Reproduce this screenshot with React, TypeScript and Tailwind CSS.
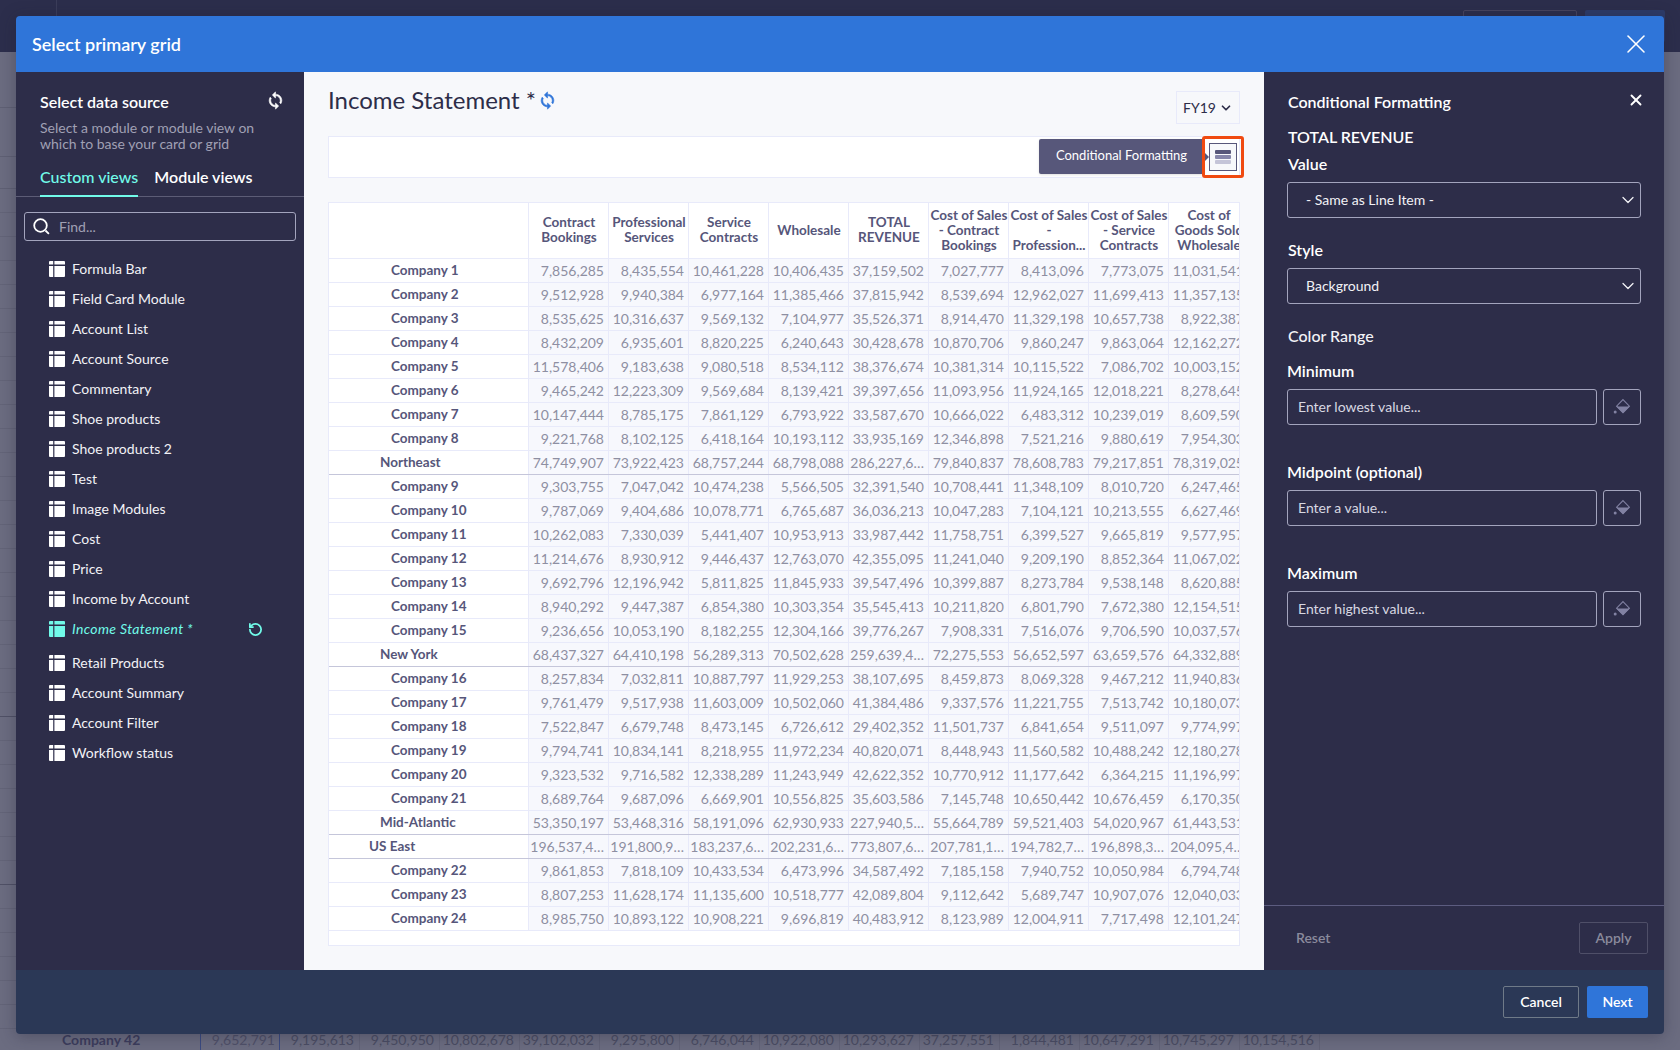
import { ChevronDown, RotateCcw, X } from "lucide-react";

const FONT = "font-['Lato','Liberation_Sans',sans-serif]";

const VIEWS = [
  "Formula Bar",
  "Field Card Module",
  "Account List",
  "Account Source",
  "Commentary",
  "Shoe products",
  "Shoe products 2",
  "Test",
  "Image Modules",
  "Cost",
  "Price",
  "Income by Account",
];
const VIEWS_AFTER = ["Retail Products", "Account Summary", "Account Filter", "Workflow status"];

const HEADERS = [
  ["Contract", "Bookings"],
  ["Professional", "Services"],
  ["Service", "Contracts"],
  ["Wholesale"],
  ["TOTAL", "REVENUE"],
  ["Cost of Sales", "- Contract", "Bookings"],
  ["Cost of Sales", "-", "Profession..."],
  ["Cost of Sales", "- Service", "Contracts"],
  ["Cost of", "Goods Sold", "Wholesale"],
];

// label, level (0 top total, 1 region, 2 company), values
const ROWS: [string, number, string][] = [
  ["Company 1", 2, "7,856,285 8,435,554 10,461,228 10,406,435 37,159,502 7,027,777 8,413,096 7,773,075 11,031,541"],
  ["Company 2", 2, "9,512,928 9,940,384 6,977,164 11,385,466 37,815,942 8,539,694 12,962,027 11,699,413 11,357,135"],
  ["Company 3", 2, "8,535,625 10,316,637 9,569,132 7,104,977 35,526,371 8,914,470 11,329,198 10,657,738 8,922,387"],
  ["Company 4", 2, "8,432,209 6,935,601 8,820,225 6,240,643 30,428,678 10,870,706 9,860,247 9,863,064 12,162,272"],
  ["Company 5", 2, "11,578,406 9,183,638 9,080,518 8,534,112 38,376,674 10,381,314 10,115,522 7,086,702 10,003,152"],
  ["Company 6", 2, "9,465,242 12,223,309 9,569,684 8,139,421 39,397,656 11,093,956 11,924,165 12,018,221 8,278,645"],
  ["Company 7", 2, "10,147,444 8,785,175 7,861,129 6,793,922 33,587,670 10,666,022 6,483,312 10,239,019 8,609,590"],
  ["Company 8", 2, "9,221,768 8,102,125 6,418,164 10,193,112 33,935,169 12,346,898 7,521,216 9,880,619 7,954,303"],
  ["Northeast", 1, "74,749,907 73,922,423 68,757,244 68,798,088 286,227,6… 79,840,837 78,608,783 79,217,851 78,319,025"],
  ["Company 9", 2, "9,303,755 7,047,042 10,474,238 5,566,505 32,391,540 10,708,441 11,348,109 8,010,720 6,247,465"],
  ["Company 10", 2, "9,787,069 9,404,686 10,078,771 6,765,687 36,036,213 10,047,283 7,104,121 10,213,555 6,627,469"],
  ["Company 11", 2, "10,262,083 7,330,039 5,441,407 10,953,913 33,987,442 11,758,751 6,399,527 9,665,819 9,577,957"],
  ["Company 12", 2, "11,214,676 8,930,912 9,446,437 12,763,070 42,355,095 11,241,040 9,209,190 8,852,364 11,067,022"],
  ["Company 13", 2, "9,692,796 12,196,942 5,811,825 11,845,933 39,547,496 10,399,887 8,273,784 9,538,148 8,620,885"],
  ["Company 14", 2, "8,940,292 9,447,387 6,854,380 10,303,354 35,545,413 10,211,820 6,801,790 7,672,380 12,154,515"],
  ["Company 15", 2, "9,236,656 10,053,190 8,182,255 12,304,166 39,776,267 7,908,331 7,516,076 9,706,590 10,037,576"],
  ["New York", 1, "68,437,327 64,410,198 56,289,313 70,502,628 259,639,4… 72,275,553 56,652,597 63,659,576 64,332,889"],
  ["Company 16", 2, "8,257,834 7,032,811 10,887,797 11,929,253 38,107,695 8,459,873 8,069,328 9,467,212 11,940,836"],
  ["Company 17", 2, "9,761,479 9,517,938 11,603,009 10,502,060 41,384,486 9,337,576 11,221,755 7,513,742 10,180,073"],
  ["Company 18", 2, "7,522,847 6,679,748 8,473,145 6,726,612 29,402,352 11,501,737 6,841,654 9,511,097 9,774,997"],
  ["Company 19", 2, "9,794,741 10,834,141 8,218,955 11,972,234 40,820,071 8,448,943 11,560,582 10,488,242 12,180,278"],
  ["Company 20", 2, "9,323,532 9,716,582 12,338,289 11,243,949 42,622,352 10,770,912 11,177,642 6,364,215 11,196,997"],
  ["Company 21", 2, "8,689,764 9,687,096 6,669,901 10,556,825 35,603,586 7,145,748 10,650,442 10,676,459 6,170,350"],
  ["Mid-Atlantic", 1, "53,350,197 53,468,316 58,191,096 62,930,933 227,940,5… 55,664,789 59,521,403 54,020,967 61,443,531"],
  ["US East", 0, "196,537,4… 191,800,9… 183,237,6… 202,231,6… 773,807,6… 207,781,1… 194,782,7… 196,898,3… 204,095,4…"],
  ["Company 22", 2, "9,861,853 7,818,109 10,433,534 6,473,996 34,587,492 7,185,158 7,940,752 10,050,984 6,794,748"],
  ["Company 23", 2, "8,807,253 11,628,174 11,135,600 10,518,777 42,089,804 9,112,642 5,689,747 10,907,076 12,040,033"],
  ["Company 24", 2, "8,985,750 10,893,122 10,908,221 9,696,819 40,483,912 8,123,989 12,004,911 7,717,498 12,101,247"],
];

const BEHIND_VALUES =
  "9,652,791 9,195,613 9,450,950 10,802,678 39,102,032 9,295,800 6,746,044 10,922,080 10,293,627 37,257,551 1,844,481 10,647,291 10,745,297 10,154,516".split(
    " ",
  );

function TableIcon({ active }: { active?: boolean }) {
  return (
    <svg
      width="16"
      height="16"
      viewBox="0 0 16 16"
      className={active ? "shrink-0 fill-[#71fbe9]" : "shrink-0 fill-white"}
    >
      <path d="M1 0h3.2v3.6H0V1a1 1 0 0 1 1-1zM5.4 0H15a1 1 0 0 1 1 1v2.6H5.4zM0 5h4.2v11H1a1 1 0 0 1-1-1zM5.4 5H16v10a1 1 0 0 1-1 1H5.4z" />
    </svg>
  );
}

function SyncIcon({ className }: { className: string }) {
  return (
    <svg width="19" height="19" viewBox="0 0 24 24" className={className}>
      <path
        fill="currentColor"
        stroke="currentColor"
        strokeWidth="0.7"
        d="M12 4V1L8 5l4 4V6c3.31 0 6 2.69 6 6 0 1.01-.25 1.97-.7 2.8l1.46 1.46C19.54 15.03 20 13.57 20 12c0-4.42-3.58-8-8-8zm0 14c-3.31 0-6-2.69-6-6 0-1.01.25-1.97.7-2.8L5.24 7.74C4.46 8.97 4 10.43 4 12c0 4.42 3.58 8 8 8v3l4-4-4-4v3z"
      />
    </svg>
  );
}

function SearchIcon() {
  return (
    <svg width="17" height="17" viewBox="0 0 17 17" fill="none" stroke="white" strokeWidth="1.8">
      <circle cx="7.5" cy="7.5" r="6.3" />
      <path d="M12.5 12.5l3.4 3.4" />
    </svg>
  );
}

function BucketIcon() {
  return (
    <svg width="18" height="18" viewBox="0 0 18 18" className="text-[#8282a3]">
      <path d="M10 1.6l6.4 6.6-6.4 6.4-6.4-6.4z" fill="none" stroke="currentColor" strokeWidth="1.1" />
      <path d="M3.4 8.4h13.2L10 15z" fill="currentColor" />
      <circle cx="2.2" cy="14" r="1.5" fill="currentColor" />
    </svg>
  );
}

function Select({ value }: { value: string }) {
  return (
    <div className="flex h-9 w-[354px] items-center justify-between rounded-[3px] border border-[#a3a4bd] pl-[18px] pr-[2px] text-sm text-[#f2f2f6]">
      <span>{value}</span>
      <ChevronDown size={20} strokeWidth={1.5} />
    </div>
  );
}

function ColorInput({ label, hint, className }: { label: string; hint: string; className: string }) {
  return (
    <div className={className}>
      <div className="text-base font-semibold leading-5 text-white">{label}</div>
      <div className="mt-2 flex gap-[6px]">
        <div className="flex h-9 w-[310px] items-center rounded-[3px] border border-[#a3a4bd] pl-[10px] text-sm text-[#d8d8e2]">
          {hint}
        </div>
        <div className="flex h-9 w-[38px] items-center justify-center rounded-[3px] border border-[#a3a4bd]">
          <BucketIcon />
        </div>
      </div>
    </div>
  );
}

function Sidebar() {
  return (
    <aside className="flex w-[288px] shrink-0 flex-col bg-[#2d2d49]">
      <div className="px-6 pt-5">
        <div className="flex items-center justify-between">
          <h3 className="text-base font-semibold leading-5 text-white">Select data source</h3>
          <SyncIcon className="-mt-1 mr-[-5px] text-white" />
        </div>
        <p className="mt-2 text-sm leading-4 text-[#a0a0b4]">
          Select a module or module view on
          <br />
          which to base your card or grid
        </p>
      </div>
      <div className="mt-2 flex gap-4 border-b border-[#5c5c76] px-6 text-base leading-5">
        <div className="-mb-px border-b-2 border-[#71fbe9] pb-2 pt-[7px] font-medium text-[#71fbe9]">Custom views</div>
        <div className="pb-2 pt-[7px] font-semibold text-white">Module views</div>
      </div>
      <div className="mx-2 mt-[15px] flex h-[29px] items-center gap-[9px] rounded-[3px] border border-[#a3a4bd] pl-2 text-sm text-[#a0a0b4]">
        <SearchIcon />
        <span>Find...</span>
      </div>
      <ul className="mt-[13px] pl-[33px] text-sm text-[#f2f2f6]">
        {VIEWS.map((v) => (
          <li key={v} className="flex h-[30px] items-center gap-[7px]">
            <TableIcon />
            {v}
          </li>
        ))}
        <li className="mb-1 flex h-[30px] items-center gap-[7px] text-[#71fbe9]">
          <TableIcon active />
          <span className="w-[169px] italic tracking-[0.35px]">Income Statement *</span>
          <RotateCcw size={15} strokeWidth={2.8} />
        </li>
        {VIEWS_AFTER.map((v) => (
          <li key={v} className="flex h-[30px] items-center gap-[7px]">
            <TableIcon />
            {v}
          </li>
        ))}
      </ul>
    </aside>
  );
}

function Grid() {
  return (
    <div className="mt-6 h-[744px] w-[912px] overflow-hidden border border-[#e8eafa] bg-white">
      <div className="flex h-14 w-[925px] border-b border-[#e8eafa]">
        <div className="w-[199px] shrink-0" />
        {HEADERS.map((lines) => (
          <div
            key={lines.join()}
            className="flex w-20 shrink-0 flex-col items-center justify-center whitespace-nowrap border-l border-[#e8eafa] pb-px pl-px text-[13.5px] font-bold leading-[15px] text-[#56567a]"
          >
            {lines.map((l) => (
              <span key={l}>{l}</span>
            ))}
          </div>
        ))}
      </div>
      {ROWS.map(([label, level, values]) => (
        <div
          key={label}
          className={
            level < 2
              ? "flex h-6 w-[925px] border-b border-[#c5c6da]"
              : "flex h-6 w-[925px] border-b border-[#e8eafa]"
          }
        >
          <div
            className={
              level === 2
                ? "w-[199px] shrink-0 pl-[62px] text-[13.5px] font-bold leading-[22px] text-[#56567a]"
                : level === 1
                  ? "w-[199px] shrink-0 pl-[51px] text-[13.5px] font-bold leading-[22px] text-[#56567a]"
                  : "w-[199px] shrink-0 pl-10 text-[13.5px] font-bold leading-[22px] text-[#56567a]"
            }
          >
            {label}
          </div>
          {values.split(" ").map((v, i) => (
            <div
              key={i}
              className="w-20 shrink-0 whitespace-nowrap border-l border-[#e8eafa] bg-[#f7f8fd] pr-1 text-right text-sm leading-[23px] text-[#8e8fa2]"
            >
              {v}
            </div>
          ))}
        </div>
      ))}
    </div>
  );
}

function Middle() {
  return (
    <main className="flex-1 bg-[#f7f8fb] pl-6 pr-6">
      <div className="flex h-[64px] items-start justify-between">
        <div className="mt-[15px] flex items-center gap-[2px]">
          <h2 className="text-2xl leading-[26px] text-[#2d2d49]">Income Statement *</h2>
          <SyncIcon className="text-[#2f75d9]" />
        </div>
        <div className="mt-[19px] flex h-[33px] w-[64px] items-center justify-center gap-[3px] border border-[#e8eafa] text-sm text-[#2d2d49]">
          FY19
          <ChevronDown size={14} strokeWidth={3} />
        </div>
      </div>
      <div className="relative h-[42px] w-[912px] border border-[#e8eafa] bg-white">
        <div className="absolute left-[710px] top-[2px] flex h-[35px] w-[165px] items-center justify-center rounded-[2px] bg-[#57577a] pb-px text-[13px] text-white shadow">
          Conditional Formatting
        </div>
        <div className="absolute left-[875px] top-[15px] size-0 border-y-[5px] border-l-[5px] border-y-transparent border-l-[#57577a]" />
        <div className="absolute left-[873px] top-[-1px] flex h-[42px] w-[42px] items-center justify-center rounded-[3px] border-[3px] border-[#f04a10]">
          <div className="flex size-[28px] flex-col items-center justify-center gap-px border border-[#57577a] bg-[#f7f8fb]">
            <span className="h-1 w-4 rounded-[1px] bg-[#57577a]" />
            <span className="h-1 w-4 rounded-[1px] bg-[#8686aa]" />
            <span className="h-1 w-4 rounded-[1px] bg-[#c4c4d8]" />
          </div>
        </div>
      </div>
      <Grid />
    </main>
  );
}

function FormatPanel() {
  return (
    <aside className="flex w-[400px] shrink-0 flex-col bg-[#2d2d49]">
      <div className="flex-1 pl-[23px] pt-5">
        <div className="flex items-center justify-between pl-px pr-[19px]">
          <h3 className="text-base font-semibold leading-5 text-white">Conditional Formatting</h3>
          <X size={18} strokeWidth={2.5} className="-mt-[5px] text-white" />
        </div>
        <div className="ml-px mt-[15px] text-base font-semibold leading-5 text-white">TOTAL REVENUE</div>
        <div className="ml-px mt-[7px] text-base font-semibold leading-5 text-white">Value</div>
        <div className="mt-2">
          <Select value="- Same as Line Item -" />
        </div>
        <div className="ml-px mt-[22px] text-base font-semibold leading-5 text-white">Style</div>
        <div className="mt-2">
          <Select value="Background" />
        </div>
        <div className="ml-px mt-[22px] text-base font-medium leading-5 text-[#f2f2f6]">Color Range</div>
        <ColorInput label="Minimum" hint="Enter lowest value..." className="mt-[15px]" />
        <ColorInput label="Midpoint (optional)" hint="Enter a value..." className="mt-[37px]" />
        <ColorInput label="Maximum" hint="Enter highest value..." className="mt-[37px]" />
      </div>
      <div className="flex h-[65px] items-center justify-between border-t border-[#5c5c80] pb-px pl-8 pr-4 text-sm font-semibold text-[#8a8a9c]">
        <span>Reset</span>
        <div className="flex h-[32px] w-[69px] items-center justify-center rounded-[2px] border border-[#4f4f68]">Apply</div>
      </div>
    </aside>
  );
}

function Behind() {
  const rows = Array.from({ length: 35 });
  return (
    <div className="h-[1050px] bg-[#6b6c80]">
      <div className="relative h-[52px] bg-[#2c2e4c]">
        <div className="absolute left-[56px] top-0 h-[52px] w-px bg-[#3b3d5a]" />
        <div className="absolute left-[1463px] top-[10px] h-8 w-[114px] rounded-[2px] border border-[#47445f]" />
        <div className="absolute left-[1585px] top-[10px] h-8 w-[80px] rounded-[2px] bg-[#2d3b68]" />
      </div>
      <div className="h-[137px] w-[1320px]">
        <div className="h-[56px] border-b border-[#5f6074]" />
        <div className="h-[49px] border-b border-[#5f6074]" />
        <div className="h-[32px] border-b border-[#5f6074]" />
      </div>
      {rows.map((_, i) => (
        <div
          key={i}
          className={
            i === 21 || i === 28 ? "h-6 w-[1320px] border-b border-[#505166]" : "h-6 w-[1320px] border-b border-[#636478]"
          }
        />
      ))}
      <div className={`${FONT} mt-px flex h-[20px]`}>
        <div className="w-[200px] pl-[62px] text-sm font-bold leading-5 text-[#3c3c5c]">Company 42</div>
        {BEHIND_VALUES.map((v, i) => (
          <div
            key={i}
            className={
              i === 0
                ? "w-20 border-x border-[#3a4a80] pr-1 text-right text-sm leading-5 text-[#4f5068]"
                : "w-20 border-r border-[#636478] pr-[5px] text-right text-sm leading-5 text-[#4a4c63]"
            }
          >
            {v}
          </div>
        ))}
      </div>
    </div>
  );
}

export default function App() {
  return (
    <div className={`${FONT} relative h-[1050px] w-[1680px] overflow-hidden`}>
      <Behind />
      <div className="absolute left-4 top-4 flex h-[1018px] w-[1648px] flex-col overflow-hidden rounded-[4px] shadow-[0_2px_16px_rgba(30,30,50,0.35)]">
        <header className="flex h-14 shrink-0 items-center justify-between bg-[#2f75d9] pl-4 pr-3 text-white">
          <h1 className="text-lg font-semibold">Select primary grid</h1>
          <X size={32} strokeWidth={1.15} />
        </header>
        <div className="flex h-[898px]">
          <Sidebar />
          <Middle />
          <FormatPanel />
        </div>
        <footer className="flex flex-1 items-center justify-end gap-2 bg-[#2b3856] pb-px pr-4 text-sm font-semibold text-white">
          <div className="flex h-8 w-[76px] items-center justify-center rounded-[2px] border border-[#6f7a88]">Cancel</div>
          <div className="flex h-8 w-[61px] items-center justify-center rounded-[2px] bg-[#2f75d9]">Next</div>
        </footer>
      </div>
    </div>
  );
}
